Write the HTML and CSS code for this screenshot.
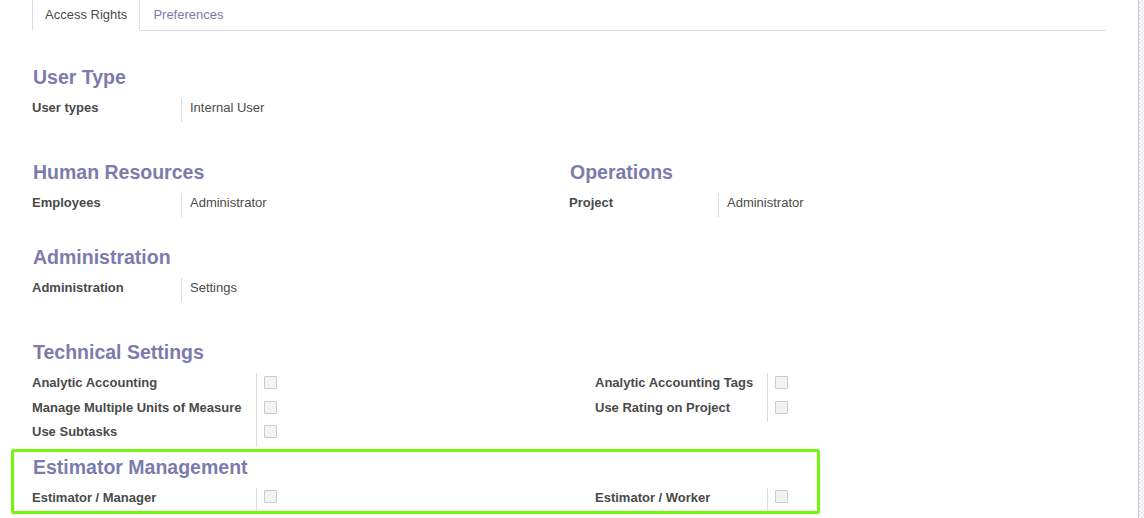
FILE: index.html
```html
<!DOCTYPE html>
<html lang="en">
<head>
<meta charset="utf-8">
<title>Access Rights</title>
<link rel="stylesheet" href="styles.css">
</head>
<body>
<div class="page">
  <main class="sheet">
    <nav class="tabs">
      <span class="tab tab--active">Access Rights</span>
      <span class="tab">Preferences</span>
    </nav>

    <section class="group group--usertype">
      <h2 class="sep">User Type</h2>
      <div class="fields fields--w149">
        <div class="lbl">User types</div><div class="val">Internal User</div>
      </div>
    </section>

    <div class="cols group--hr">
      <section class="group">
        <h2 class="sep">Human Resources</h2>
        <div class="fields fields--w149">
          <div class="lbl">Employees</div><div class="val">Administrator</div>
        </div>
      </section>
      <section class="group">
        <h2 class="sep">Operations</h2>
        <div class="fields fields--w149">
          <div class="lbl">Project</div><div class="val">Administrator</div>
        </div>
      </section>
    </div>

    <section class="group group--admin">
      <h2 class="sep">Administration</h2>
      <div class="fields fields--w149">
        <div class="lbl">Administration</div><div class="val">Settings</div>
      </div>
    </section>

    <section class="group group--tech">
      <h2 class="sep">Technical Settings</h2>
      <div class="cols">
        <div class="fields fields--w224 fields--check">
          <div class="lbl">Analytic Accounting</div><div class="val"><span class="cb"></span></div>
          <div class="lbl">Manage Multiple Units of Measure</div><div class="val"><span class="cb"></span></div>
          <div class="lbl">Use Subtasks</div><div class="val"><span class="cb"></span></div>
        </div>
        <div class="fields fields--w172 fields--check fields--inset">
          <div class="lbl">Analytic Accounting Tags</div><div class="val"><span class="cb"></span></div>
          <div class="lbl">Use Rating on Project</div><div class="val"><span class="cb"></span></div>
        </div>
      </div>
    </section>

    <div class="highlight">
      <section class="group">
        <h2 class="sep">Estimator Management</h2>
        <div class="cols cols--box">
          <div class="fields fields--w224 fields--est">
            <div class="lbl">Estimator / Manager</div><div class="val"><span class="cb"></span></div>
          </div>
          <div class="fields fields--w172 fields--est fields--inset">
            <div class="lbl">Estimator / Worker</div><div class="val"><span class="cb"></span></div>
          </div>
        </div>
      </section>
    </div>
  </main>
  <div class="edge"></div>
</div>
</body>
</html>
```

FILE: styles.css
```css
* { box-sizing: border-box; }

html, body {
  margin: 0;
  padding: 0;
  background: #ffffff;
}

body {
  font-family: "Liberation Sans", Arial, sans-serif;
  font-size: 13px;
  line-height: 15px;
  color: #4c4c4c;
}

.page {
  display: flex;
  min-height: 100vh;
}

.sheet {
  flex: 1;
  padding: 0 32px;
}

.edge {
  width: 6px;
  flex: none;
  border-left: 1px solid #c9c7d4;
  background: repeating-conic-gradient(#e9e9ee 0 25%, #fbfbfd 0 50%) 0 0 / 4px 4px;
}

/* tabs */
.tabs {
  display: flex;
  border-bottom: 1px solid #dcdbe5;
}

.tab {
  padding: 7px 12px 8px;
  border: 1px solid transparent;
  border-top: 0;
  margin-bottom: -1px;
  color: #7c7bad;
}

.tab--active {
  color: #4c4c4c;
  background: #fff;
  border-color: #dcdbe5;
  border-bottom-color: #fff;
}

/* groups */
.sep {
  margin: 0 0 10px;
  padding-left: 1px;
  font-size: 19.5px;
  line-height: 22px;
  font-weight: bold;
  color: #7c7bad;
}

.group--usertype { margin-top: 35px; }
.group--hr { margin-top: 39px; }
.group--admin { margin-top: 29px; }
.group--tech { margin-top: 39px; }

.cols {
  display: grid;
  grid-template-columns: 537px 537px;
  align-items: start;
}

.cols--box {
  grid-template-columns: 537px 1fr;
}

/* field tables */
.fields {
  display: grid;
  grid-template-columns: 149px 1fr;
  align-content: start;
}

.fields--w224 { grid-template-columns: 224px 1fr; }
.fields--w172 { grid-template-columns: 172px 1fr; }
.fields--inset { padding-left: 26px; }

.lbl, .val {
  height: 24px;
  padding-top: 2px;
}

.lbl {
  font-weight: bold;
  color: #4a4a4a;
  white-space: nowrap;
}

.val {
  border-left: 1px solid #dcdcdc;
  padding-left: 8px;
}

.fields--check .lbl,
.fields--check .val {
  height: 24.5px;
  padding-top: 2px;
}

.fields--check .val {
  padding-top: 3px;
}

.fields--est .lbl,
.fields--est .val {
  height: 23px;
  padding-top: 2px;
}

.cb {
  display: block;
  width: 13px;
  height: 13px;
  margin-left: -1px;
  border: 1px solid #cbcbcb;
  border-radius: 1px;
  background: #f3f3f3;
}

/* annotation box */
.highlight {
  width: 809px;
  margin: 2px 0 0 -21px;
  padding: 4px 0 0 18px;
  border: 3px solid #74f50e;
  border-radius: 3px;
}
```
